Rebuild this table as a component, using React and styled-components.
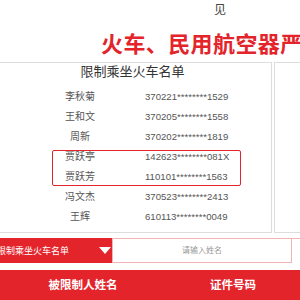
import React from 'react';
import styled, { createGlobalStyle } from 'styled-components';

const GlobalStyle = createGlobalStyle`
  html, body {
    margin: 0;
    padding: 0;
    background: #fff;
  }
  body {
    font-family: "Liberation Sans", "Noto Sans CJK SC", sans-serif;
  }
`;

const RED = '#e3242b';

const Page = styled.div`
  width: 300px;
  height: 300px;
  overflow: hidden;
  background: #fff;
`;

const TopNote = styled.div`
  height: 20px;
  line-height: 20px;
  padding-left: 214px;
  font-size: 12px;
  color: #444;
`;

const Headline = styled.h1`
  margin: 0;
  height: 42px;
  padding-top: 8px;
  box-sizing: border-box;
  line-height: 34px;
  padding-left: 101px;
  font-size: 22px;
  letter-spacing: 0.4px;
  font-weight: 700;
  color: ${RED};
  white-space: nowrap;
`;

const Panels = styled.div`
  display: flex;
  height: 171px;
`;

const ListPanel = styled.div`
  position: relative;
  width: 272px;
  flex: none;
  display: flex;
  flex-direction: column;
  border: 1px solid #ddd;
  border-left: none;
  box-sizing: border-box;
`;

const SidePanel = styled.div`
  flex: 1;
  margin-left: 2px;
  border: 1px solid #ddd;
  border-right: none;
`;

const PanelTitle = styled.div`
  height: 18px;
  line-height: 18px;
  text-align: center;
  padding-right: 6px;
  font-size: 13px;
  color: #333;
  background: #fff;
`;

const ListViewport = styled.div`
  flex: 1;
  overflow: hidden;
`;

const ListInner = styled.div`
  margin-top: -14px;
`;

const Row = styled.div`
  display: grid;
  grid-template-columns: 145px 1fr;
  height: 20px;
  line-height: 20px;
  font-size: 10px;
  color: #555;
`;

const NameCell = styled.span`
  padding-left: 15px;
  text-align: center;
`;

const IdCell = styled.span`
  font-size: 9.6px;
  white-space: nowrap;
`;

const Highlight = styled.div`
  position: absolute;
  left: 52px;
  top: 87px;
  width: 189px;
  height: 36px;
  box-sizing: border-box;
  border: 1.5px solid ${RED};
  border-radius: 2px;
`;

const SearchBar = styled.div`
  display: flex;
  height: 25px;
  margin-top: 5px;
`;

const Select = styled.div`
  width: 112px;
  flex: none;
  display: flex;
  align-items: center;
  justify-content: space-between;
  background: ${RED};
  color: #fff;
  font-size: 9px;
  padding-right: 1px;
  box-sizing: border-box;
  white-space: nowrap;
  overflow: hidden;
`;

const SelectText = styled.span`
  margin-left: -3px;
`;

const Caret = styled.span`
  width: 0;
  height: 0;
  border-left: 6px solid transparent;
  border-right: 6px solid transparent;
  border-top: 7px solid #fff;
`;

const NameInput = styled.input`
  width: 180px;
  flex: none;
  height: 25px;
  box-sizing: border-box;
  border: 1px solid #f0b4b4;
  outline: none;
  text-align: center;
  font-size: 8px;
  font-family: "Liberation Sans", "Noto Sans CJK SC", sans-serif;
  color: #333;
  &::placeholder {
    color: #999;
  }
`;

const SearchButton = styled.div`
  flex: 1;
  border-top: 1px solid #f0b4b4;
`;

const TableHead = styled.div`
  display: grid;
  grid-template-columns: 166px 1fr;
  height: 30px;
  margin-top: 7px;
  background: ${RED};
`;

const HeadCell = styled.div`
  line-height: 30px;
  text-align: center;
  color: #fff;
  font-size: 11.5px;
  font-weight: 700;
  white-space: nowrap;
`;

const people = [
  ['张立新', '370211********0736'],
  ['李秋菊', '370221********1529'],
  ['王和文', '370205********1558'],
  ['周新', '370202********1819'],
  ['贾跃亭', '142623********081X'],
  ['贾跃芳', '110101********1563'],
  ['冯文杰', '370523********2413'],
  ['王辉', '610113********0049'],
];

export default function App() {
  return (
    <Page>
      <GlobalStyle />
      <TopNote>见</TopNote>
      <Headline>火车、民用航空器严格限制</Headline>
      <Panels>
        <ListPanel>
          <PanelTitle>限制乘坐火车名单</PanelTitle>
          <ListViewport>
            <ListInner>
              {people.map(([name, id]) => (
                <Row key={id}>
                  <NameCell>{name}</NameCell>
                  <IdCell>{id}</IdCell>
                </Row>
              ))}
            </ListInner>
          </ListViewport>
          <Highlight />
        </ListPanel>
        <SidePanel />
      </Panels>
      <SearchBar>
        <Select>
          <SelectText>限制乘坐火车名单</SelectText>
          <Caret />
        </Select>
        <NameInput placeholder="请输入姓名" />
        <SearchButton />
      </SearchBar>
      <TableHead>
        <HeadCell>被限制人姓名</HeadCell>
        <HeadCell>证件号码</HeadCell>
      </TableHead>
    </Page>
  );
}
